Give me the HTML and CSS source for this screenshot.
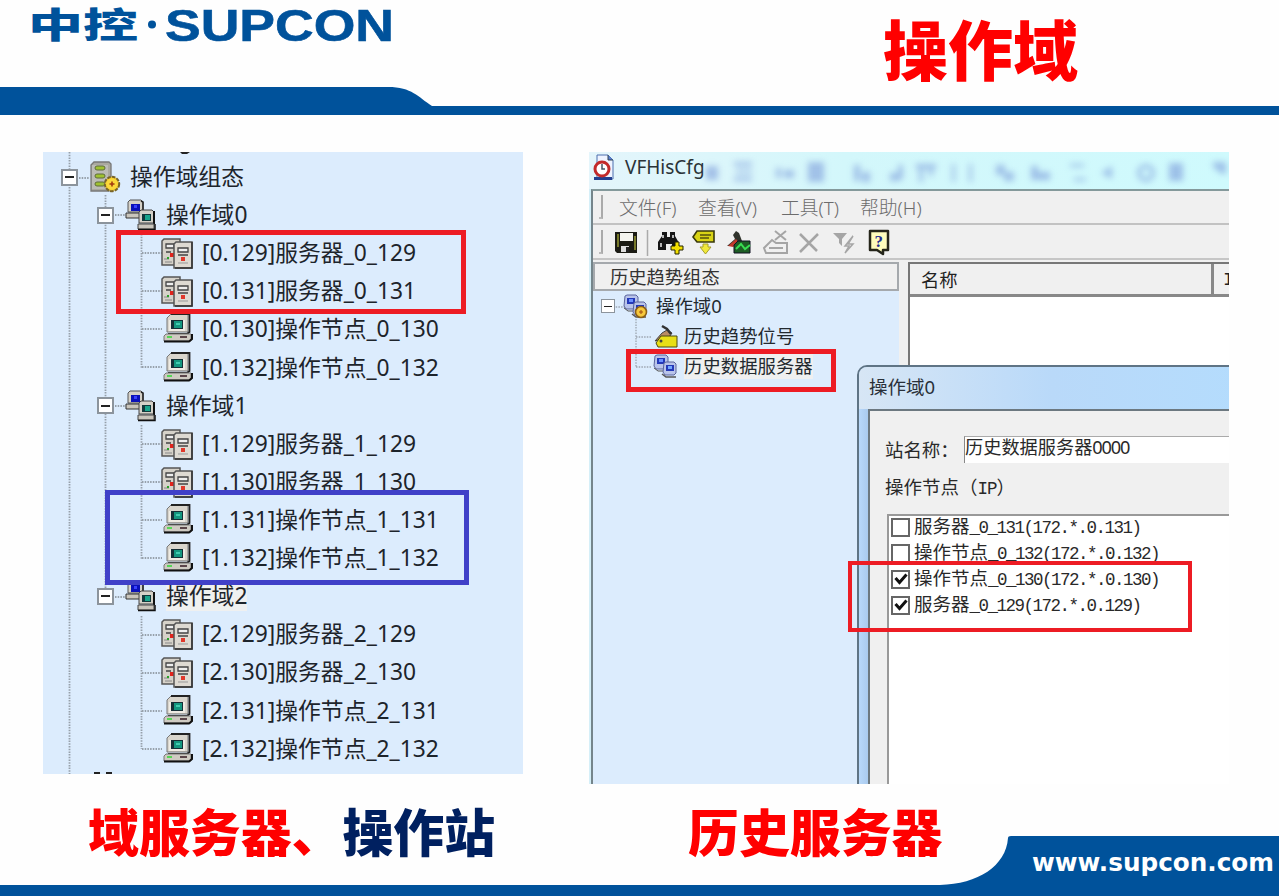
FILE: index.html
```html
<!DOCTYPE html>
<html lang="zh-CN">
<head>
<meta charset="utf-8">
<title>操作域</title>
<link rel="stylesheet" href="styles.css">
</head>
<body>
<svg class="defs" width="0" height="0">
  <symbol id="root" viewBox="0 0 32 32">
    <path d="M2 4 5 1H20L22 3V28L20 30H2Z" fill="#aaa9a0" stroke="#777" stroke-width="1.3"/>
    <path d="M3 4H19V28H3Z" fill="#bcbcb6"/>
    <g fill="#9fc231" stroke="#5f6b3c"><rect x="6" y="5" width="10" height="4" rx="2"/><rect x="6" y="13" width="10" height="4" rx="2"/><rect x="6" y="21" width="10" height="4" rx="2"/></g>
    <circle cx="23" cy="23" r="7.2" fill="#f0c629" stroke="#77642a" stroke-width="2" stroke-dasharray="3.6 1.2"/>
    <circle cx="23" cy="23" r="5.8" fill="#fbd93a"/><path d="M23 20.5V25.500M20.500 23H25.500" stroke="#a33a10" stroke-width="1.600"/>
  </symbol>
  <symbol id="net" viewBox="0 0 32 32">
    <path d="M3 3 5 1H16L18 3V13H3Z" fill="#d5d1c8" stroke="#555"/><path d="M16 2 18 3V17H4" fill="none" stroke="#222" stroke-width="1.500"/>
    <path d="M1 14H15V19H1Z" fill="#c9c5bc" stroke="#333"/><rect x="6" y="5" width="9" height="7" fill="#0b11b8"/><path d="M9 6h3v3H9z" fill="#3a40ff"/>
    <path d="M14 13 16 11H27L29 13V24H14Z" fill="#d5d1c8" stroke="#444"/><path d="M29 12V25" stroke="#111" stroke-width="2"/>
    <path d="M13 25H29V30H13Z" fill="#c9c5bc" stroke="#444"/><path d="M13 30.500H30V25" fill="none" stroke="#111" stroke-width="1.500"/>
    <rect x="17" y="15" width="9" height="7" fill="#123a3c"/><path d="M20 16h5v5h-5z" fill="#18a58c"/>
  </symbol>
  <symbol id="srv" viewBox="0 0 32 32">
    <path d="M1 4 3 2H19V28H1Z" fill="#d6d2c9" stroke="#555" stroke-width="1.500"/>
    <path d="M5 7H13V11H5ZM5 15H10" fill="#eee" stroke="#444" stroke-width="1.300"/><path d="M3 22H8M4 25H11" stroke="#888"/><path d="M9 16h4v4H9z" fill="#e0241c"/><path d="M6 20h2v2H6z" fill="#29a329"/>
    <path d="M13 7 15 5H31V31H13Z" fill="#dedad2" stroke="#555" stroke-width="1.500"/><path d="M31 5V31H14" fill="none" stroke="#333" stroke-width="1.500"/>
    <path d="M17 11H27V15H17ZM17 18H27" fill="#eee" stroke="#444" stroke-width="1.300"/><path d="M20 20h4v4h-4z" fill="#e0382b"/><path d="M17 26H27" stroke="#999"/>
  </symbol>
  <symbol id="pc" viewBox="0 0 32 32">
    <path d="M6 5 10 1H27V19H6Z" fill="#d9d5cc" stroke="#777"/><path d="M8 7H24V18H8Z" fill="#efebe3"/><path d="M10 1H28.500V19L26 21H7" fill="none" stroke="#222" stroke-width="1.800"/>
    <rect x="10" y="7" width="12" height="9" fill="#152f36"/><rect x="13" y="8" width="8" height="7" fill="#14977f"/><path d="M15 10h4v2h-4z" fill="#3fcdb0"/>
    <path d="M5 21H30V28H3V23Z" fill="#cfcbc2" stroke="#777"/><path d="M3 28.500H28L31 26V21" fill="none" stroke="#111" stroke-width="2"/><path d="M6 24H11" stroke="#57d657" stroke-width="2"/><path d="M19 24H26" stroke="#4d363c" stroke-width="1.800"/>
  </symbol>
  <symbol id="bluepc" viewBox="0 0 25 25">
    <path d="M2 2 4 1H13L15 3V13L12 15H3L1 12Z" fill="#b9c4ea" stroke="#5a649c"/><path d="M4 4H12V10H4Z" fill="#2439b8"/><path d="M6 5h4v3H6z" fill="#6b90ff"/><path d="M1 14 5 17H12" fill="none" stroke="#555"/>
    <path d="M11 9 13 8H21L23 10V19L21 21H12L10 18Z" fill="#b9c4ea" stroke="#5a649c"/><path d="M13 11H21V17H13Z" fill="#2439b8"/><path d="M15 12h4v3h-4z" fill="#72a7ff"/><path d="M9 20 13 23H23" fill="none" stroke="#555" stroke-width="1.500"/>
  </symbol>
</svg>

<div class="slide">
  <header class="top">
    <svg class="logo" width="400" height="60" viewBox="0 0 400 60">
      <text class="logo-cn" x="28" y="38" textLength="110" lengthAdjust="spacingAndGlyphs">中控</text>
      <circle cx="152" cy="24.500" r="4" fill="#00529b"/>
      <text class="logo-en" x="165" y="40.500" textLength="229" lengthAdjust="spacingAndGlyphs">SUPCON</text>
    </svg>
    <h1>操作域</h1>
    <svg class="band" width="1279" height="32" viewBox="0 0 1279 32"><path d="M0 3H388C412 3 418 13 432 22H1279V31H0Z" fill="#00529b"/></svg>
  </header>

  <main class="shots">
    <section class="tree">
      <svg class="lines" width="480" height="622" viewBox="0 0 480 622">
        <g fill="none" stroke="#96a0aa" stroke-width="1.800" stroke-dasharray="1.500 1.200">
          <path d="M26.500 0V622M62.500 43V445M98.500 82V216M98.500 273V407M98.500 464V597"/>
          <path d="M36 26H46M72 63H83M72 254H83M72 445H83M99 101H119M99 139H119M99 177H119M99 215H119M99 292H119M99 330H119M99 368H119M99 406H119M99 483H119M99 521H119M99 559H119M99 597H119"/>
        </g>
        <path d="M137 0H147L144 2H139ZM51 620h6v2h-6zM63 620h6v2h-6z" fill="#222"/>
      </svg>
      <div class="row l0"><i class="exp"></i><svg class="ic30"><use href="#root"/></svg><span>操作域组态</span></div>
      <div class="row l1"><i class="exp"></i><svg class="ic30"><use href="#net"/></svg><span>操作域0</span></div>
      <div class="row l2"><svg><use href="#srv"/></svg><span>[0.129]服务器_0_129</span></div>
      <div class="row l2"><svg><use href="#srv"/></svg><span>[0.131]服务器_0_131</span></div>
      <div class="row l2"><svg><use href="#pc"/></svg><span>[0.130]操作节点_0_130</span></div>
      <div class="row l2"><svg><use href="#pc"/></svg><span>[0.132]操作节点_0_132</span></div>
      <div class="row l1"><i class="exp"></i><svg class="ic30"><use href="#net"/></svg><span>操作域1</span></div>
      <div class="row l2"><svg><use href="#srv"/></svg><span>[1.129]服务器_1_129</span></div>
      <div class="row l2"><svg><use href="#srv"/></svg><span>[1.130]服务器_1_130</span></div>
      <div class="row l2"><svg><use href="#pc"/></svg><span>[1.131]操作节点_1_131</span></div>
      <div class="row l2"><svg><use href="#pc"/></svg><span>[1.132]操作节点_1_132</span></div>
      <div class="row l1"><i class="exp"></i><svg class="ic30"><use href="#net"/></svg><span class="sel">操作域2</span></div>
      <div class="row l2"><svg><use href="#srv"/></svg><span>[2.129]服务器_2_129</span></div>
      <div class="row l2"><svg><use href="#srv"/></svg><span>[2.130]服务器_2_130</span></div>
      <div class="row l2"><svg><use href="#pc"/></svg><span>[2.131]操作节点_2_131</span></div>
      <div class="row l2"><svg><use href="#pc"/></svg><span>[2.132]操作节点_2_132</span></div>
      <div class="mark mark-servers"></div>
      <div class="mark mark-nodes"></div>
    </section>

    <section class="app">
      <div class="titlebar">
        <svg class="appicon" width="22" height="27" viewBox="0 0 22 27"><path d="M4 1H15L20 6V25H4Z" fill="#eef3ff" stroke="#4d6fae"/><path d="M15 1V6H20" fill="#5b7fd0" stroke="#345"/><path d="M1 24.500H19" stroke="#23408f" stroke-width="3"/><circle cx="9" cy="15" r="7" fill="#fff" stroke="#c32a2a" stroke-width="3"/><path d="M9 10V15H12" fill="none" stroke="#456" stroke-width="1.500"/></svg>
        <span>VFHisCfg</span>
        <svg class="ghost" width="520" height="37" viewBox="0 0 520 37"><g fill="#7f9fdc" opacity=".62"><path d="M0 14h12v14H0zM28 10h18v4H28zM30 18h16v3H30zM28 25h18v4H28zM70 16h5v10h-5zM78 18h10v8H78zM102 10h16v20h-16zM148 13h6v16h-6zM156 20h8v10h-8zM184 21h10v8h-10zM192 13h5v14h-5zM210 12h20v5h-20zM213 12h4v18h-4zM223 12h4v12h-4zM246 12h3v18h-3zM263 12h3v18h-3zM290 13h9v10h-9zM298 20h10v9h-10zM325 14h7v14h-7zM332 20h12v8h-12zM364 12h14v3h-14zM368 26h12v3h-12zM395 21 406 14V27zM463 11h14v18h-14zM507 10h13v12h-4L507 15z"/><circle cx="440" cy="21" r="7" fill="none" stroke="#7f9fdc" stroke-width="4"/></g></svg>
      </div>
      <div class="window">
        <div class="menubar"><i class="grip"></i><span>文件(F)</span><span class="wide">查看(V)</span><span>工具(T)</span><span>帮助(H)</span></div>
        <div class="toolbar">
          <i class="grip"></i>
          <svg class="tools" width="290" height="32" viewBox="0 0 290 32">
            <path d="M9 6H31V27H11L9 25Z" fill="#1b1b14"/><path d="M14 7H27V15H14Z" fill="#f4f4ee"/><path d="M11 8h2v13h-2zM28 10h2v14h-2z" fill="#77792a"/><path d="M15 20h8v6h-8z" fill="#ddd"/><path d="M20 21h3v5h-3z" fill="#222"/>
            <path d="M41.500 4V30" stroke="#aaa" stroke-width="1.500"/>
            <path d="M56 6H61V11H64V6H69V10L73 17V23H66V18H60V24H52V16L56 10Z" fill="#161616"/><path d="M57 9V12M67 9V12M55 17V21" stroke="#eee" stroke-width="1.500"/><path d="M69 16H73V20H77V24H73V28H69V24H65V20H69Z" fill="#f4e000" stroke="#252500"/>
            <path d="M91 5H108V16H91L87 11Z" fill="#d8d315" stroke="#38380b" stroke-width="1.600"/><path d="M94 9H105M94 12H103" stroke="#55520c" stroke-width="1.500"/><path d="M97 18H102V21H105L99.500 28L94 21H97Z" fill="#f0e83a" stroke="#a6a02b"/>
            <path d="M121 20 129 13 127 9 130 5 133 7 136 15 131 20H124Z" fill="#30332c"/><path d="M122 20 130 13 133 17 127 21Z" fill="#c0392b"/><path d="M132 15H144V27H128V19Z" fill="#1e5d25" stroke="#112"/><path d="M130 23 135 18 139 23 144 19" fill="none" stroke="#39df52" stroke-width="2"/>
            <g fill="none" stroke="#a5a5a5" stroke-width="2"><path d="M158 22 166 14 170 17H181V27H160ZM169 5 180 14M180 5 169 14M163 22H177"/><path d="M194 8 211 25M212 8 194 26" stroke-width="2.500"/></g>
            <path d="M227 7H241L236 13V20L233 17V13Z" fill="#a5a5a5"/><path d="M247 10 239 20H243L239 27L247 18H242Z" fill="#eee" stroke="#a5a5a5" stroke-width="1.500"/>
            <path d="M264 5H282V24H277L277 28L271 24H264Z" fill="#fffcbc" stroke="#25251a" stroke-width="2.500" stroke-linejoin="round"/><text class="help" x="268.500" y="20.500">?</text>
          </svg>
        </div>
        <div class="panes">
          <div class="side">
            <div class="sidehead">历史趋势组态</div>
            <div class="sidetree">
              <svg class="lines" width="100" height="100" viewBox="0 0 100 100"><path d="M20 16H32M43 28V76M43 46H59M43 76H59" fill="none" stroke="#9ca5b0" stroke-dasharray="1.500 1.200" stroke-width="1.300"/></svg>
              <div class="srow s0"><i class="exp small"></i><svg width="25" height="25"><use href="#bluepc"/><circle cx="18" cy="18" r="5.500" fill="#f7c83b" stroke="#8a5f16" stroke-width="1.600"/><path d="M18 16v4M16 18h4" stroke="#a04a10"/></svg><span>操作域0</span></div>
              <div class="srow s1"><svg width="25" height="25" viewBox="0 0 25 25"><path d="M2 17 9 9 14 6 19 9 17 12Z" fill="#b98b63" stroke="#444"/><path d="M9 2 14 5 18 10" fill="none" stroke="#333" stroke-width="2.500"/><path d="M3 19 8 12H24V23H5Z" fill="#e8df16" stroke="#4b4812"/><circle cx="8" cy="17" r="1.500" fill="#444"/></svg><span>历史趋势位号</span></div>
              <div class="srow s1"><svg width="25" height="25"><use href="#bluepc"/></svg><span class="sel">历史数据服务器</span></div>
            </div>
          </div>
          <div class="list"><div class="listhead"><span>名称</span><b>I</b></div></div>
        </div>
      </div>

      <div class="dialog">
        <div class="dlgtitle">操作域0</div>
        <div class="dlgbody">
          <div class="field"><label>站名称：</label><div class="input">历史数据服务器<span class="num">0000</span></div></div>
          <div class="caption">操作节点（<span class="mono">IP</span>）</div>
          <div class="checks">
            <div class="check"><i></i><span>服务器<span class="mono">_0_131(172.*.0.131)</span></span></div>
            <div class="check"><i></i><span>操作节点<span class="mono">_0_132(172.*.0.132)</span></span></div>
            <div class="check"><i><svg width="14" height="14" viewBox="0 0 14 14"><path d="M1.500 6 5.500 10.500 12.500 2.500" fill="none" stroke="#111" stroke-width="3"/></svg></i><span>操作节点<span class="mono">_0_130(172.*.0.130)</span></span></div>
            <div class="check"><i><svg width="14" height="14" viewBox="0 0 14 14"><path d="M1.500 6 5.500 10.500 12.500 2.500" fill="none" stroke="#111" stroke-width="3"/></svg></i><span>服务器<span class="mono">_0_129(172.*.0.129)</span></span></div>
          </div>
        </div>
      </div>
      <div class="mark mark-history"></div>
      <div class="mark mark-checks"></div>
    </section>
  </main>

  <footer class="bottom">
    <div class="captions"><p class="cap-left">域服务器、<em>操作站</em></p><p class="cap-right">历史服务器</p></div>
    <svg class="swoosh" width="1279" height="62" viewBox="0 0 1279 62"><path d="M0 51H940C978 50 1006 32 1008 4Q1008 2 1011 2H1279V62H0Z" fill="#00529b"/>
      <text class="url" x="1032" y="37" textLength="242" lengthAdjust="spacingAndGlyphs">www.supcon.com</text></svg>
  </footer>
</div>
</body>
</html>
```
FILE: styles.css
```css
* { box-sizing: border-box; }
body { margin: 0; background: #fff; font-family: "Noto Sans", "Noto Sans CJK SC", sans-serif; }
.defs { position: absolute; }
.slide { width: 1279px; height: 896px; overflow: hidden; display: flex; flex-direction: column; background: #fefefe; }

.top { height: 152px; display: grid; grid-template: 84px 68px / 400px 1fr; flex: none; }
.logo { display: block; overflow: visible; }
.logo-cn { font: 900 35px "Noto Sans CJK SC", sans-serif; fill: #00529b; }
.logo-en { font: 700 44px "Liberation Sans", Arial, sans-serif; fill: #00529b; stroke: #00529b; stroke-width: .6px; }
h1 { margin: 0 0 0 483px; padding-top: 1px; font: 900 65px/92px "Noto Sans CJK SC", sans-serif; color: #f00; white-space: nowrap; }
.band { grid-column: 1 / 3; display: block; }

.shots { height: 632px; display: flex; align-items: flex-start; gap: 66px; padding-left: 43px; flex: none; }
.tree { position: relative; width: 480px; height: 622px; padding-top: 6px; background: #dcecfd; overflow: hidden; flex: none; }
.lines { position: absolute; left: 0; top: 0; }
.row { position: relative; height: 38.12px; display: flex; align-items: center; font-size: 22.8px; line-height: 30px; color: #1d242b; white-space: nowrap; }
.row svg { width: 32px; height: 32px; margin-right: 9px; flex: none; }
.row svg.ic30 { margin: 0 9px 0 11px; }
.l0 { padding-left: 18px; }
.l1 { padding-left: 54px; }
.l2 { padding-left: 118px; }
.exp { width: 17px; height: 17px; border: 2px solid #8c949c; background: #fff; display: flex; align-items: center; justify-content: center; flex: none; }
.exp::after { content: ""; width: 9px; height: 2px; background: #222; }
.exp.small { width: 14px; height: 14px; border-width: 1px; }
.exp.small::after { width: 8px; height: 1px; }
.sel { background: #eff0f0; }
.mark { position: absolute; border: 5px solid #ed1c24; }
.mark-servers { left: 73px; top: 78px; width: 350px; height: 84px; }
.mark-nodes { left: 62px; top: 338px; width: 364px; height: 95px; border-color: #4040c8; }
.mark-history { left: 37px; top: 197px; width: 210px; height: 43px; }
.mark-checks { left: 259px; top: 409px; width: 344px; height: 71px; border-width: 4px; }

.app { position: relative; width: 640px; height: 632px; overflow: hidden; background: #d5eff8; flex: none; }
.titlebar { height: 37px; display: flex; align-items: center; padding-left: 4px; background: linear-gradient(90deg, #e4f5fb, #d3f7fb 40%, #cffafd); color: #2a3338; font-size: 19px; }
.titlebar .appicon { margin-top: -7px; margin-right: 10px; }
.titlebar span { margin-top: -7px; width: 81px; }
.ghost { filter: blur(3px); }
.window { margin-left: 2px; height: 595px; border-left: 2px solid #75858b; border-top: 2px solid #84999b; background: #f0f0f0; }
.menubar { height: 34px; display: flex; align-items: center; padding-left: 6px; border-bottom: 2px solid #c2c2c2; font-size: 18.800px; color: #6c6c6c; font-weight: 300; }
.menubar span { width: 79px; white-space: nowrap; }
.menubar span.wide { width: 83px; }
.grip { width: 4px; height: 24px; border-right: 2px solid #aaa; border-bottom: 2px solid #bbb; margin-right: 16px; }
.toolbar { height: 35px; display: flex; align-items: center; padding-left: 6px; border-bottom: 2px solid #c6c6c6; }
.toolbar .grip { margin-right: 3px; }
.help { font: 700 17px "Liberation Serif", serif; fill: #222b8e; }
.panes { height: 524px; display: flex; gap: 9px; padding-top: 2px; }
.side { width: 306px; background: #dcecfd; flex: none; }
.sidehead { height: 29px; padding: 0 0 2px 15px; border: 2px solid #a5a9ad; background: #f0f0f0; font-size: 18.300px; line-height: 26px; color: #333; }
.sidetree { position: relative; }
.srow { position: relative; height: 30px; display: flex; align-items: center; font-size: 18.400px; line-height: 26px; color: #23292f; white-space: nowrap; }
.s0 { padding-left: 8px; }
.s0 svg { margin: 0 8px; }
.s1 { padding-left: 60px; }
.s1 svg { margin-right: 6px; }
.list { flex: 1; border: 2px solid #777; border-right: 0; background: #fff; }
.listhead { height: 33px; display: flex; border-bottom: 3px solid #888; background: #f0f0f0; font-size: 18.300px; line-height: 32px; color: #222; }
.listhead span { width: 304px; padding-left: 11px; border-right: 3px solid #888; flex: none; }
.listhead b { padding-left: 9px; font: 400 19px/32px "Liberation Mono", monospace; }

.dialog { position: absolute; left: 268px; top: 213px; width: 390px; height: 440px; border: 2px solid #5f7485; border-radius: 10px 0 0 0; background: linear-gradient(90deg, #b8d8fa 0, #a5c6ea 12px, #b8dcfd 100%); }
.dlgtitle { height: 42px; padding-left: 10px; border-radius: 8px 0 0 0; background: linear-gradient(90deg, #d7e6f5, #b9d9f9 50%, #b4dcfd); color: #293039; font-size: 18.500px; line-height: 39px; }
.dlgbody { margin-left: 9px; height: 396px; border-left: 2px solid #6c7880; border-top: 2px solid #6c7880; background: #f0f0f0; padding: 25px 0 0 15px; font-size: 18.500px; color: #292929; }
.field { display: flex; height: 27px; }
.field label { width: 79px; line-height: 28px; letter-spacing: -.1px; }
.input { flex: 1; border-left: 1px solid #888; border-top: 1px solid #aaa; background: #fff; font-size: 18.200px; line-height: 21px; white-space: nowrap; }
.num { letter-spacing: -1.2px; }
.caption { height: 51px; line-height: 48px; }
.mono { font-family: "Liberation Mono", monospace; font-size: 17.500px; letter-spacing: -1.5px; }
.caption .mono { letter-spacing: -1px; }
.checks { margin-left: 2px; height: 290px; border-left: 2px solid #999; border-top: 2px solid #999; background: #fff; }
.check { position: relative; top: -2px; height: 26px; display: flex; align-items: center; gap: 4px; padding-left: 2px; line-height: 26px; white-space: nowrap; }
.check i { width: 19px; height: 19px; border: 2px solid #666; background: #fff; display: flex; align-items: center; justify-content: center; }

.bottom { height: 112px; display: grid; grid-template-rows: 50px 62px; flex: none; }
.captions { position: relative; z-index: 1; display: flex; font: 900 50.900px/92px "Noto Sans CJK SC", sans-serif; color: #f00; white-space: nowrap; }
.captions p { margin: 0; }
.cap-left { width: 600px; margin-left: 88px !important; }
.cap-left em { font-style: normal; color: #002060; }
.swoosh { display: block; }
.url { font: 700 24px "DejaVu Sans", sans-serif; fill: #fff; }
```
